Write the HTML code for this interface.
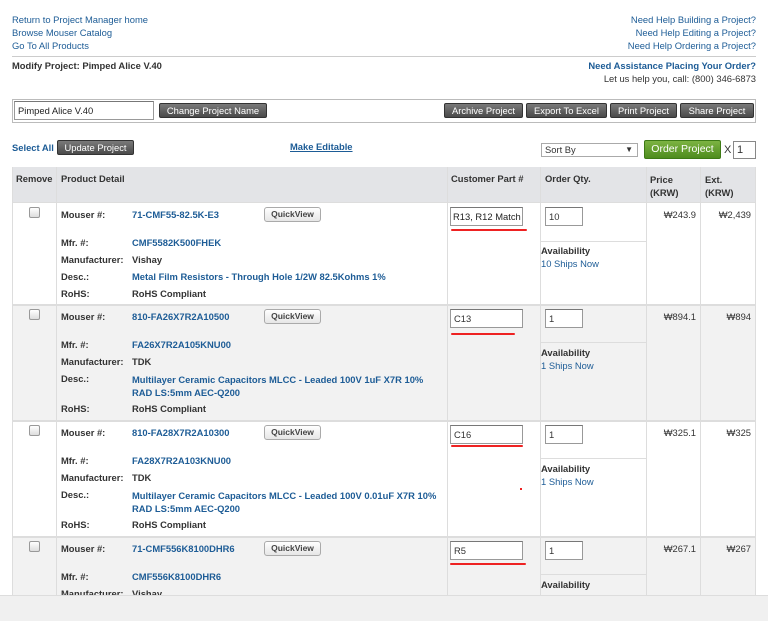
<!DOCTYPE html>
<html><head><meta charset="utf-8"><style>
*{margin:0;padding:0;box-sizing:border-box}
body{width:768px;height:621px;overflow:hidden;background:#fff;font-family:"Liberation Sans",Arial,sans-serif;font-size:9.4px;color:#333;position:relative}
.a{position:absolute;white-space:nowrap}
.l{color:#1d5c96}
.b{font-weight:bold}
.btn{position:absolute;background:linear-gradient(#7a7a7a,#4a4a4a);color:#fff;border:1px solid #333;border-radius:2px;font-size:9.4px;text-align:center;line-height:13px;white-space:nowrap}
.inp{position:absolute;border:1px solid #999;border-top-color:#777;background:#fff;font-size:9.4px;padding-left:3px;line-height:17px;white-space:nowrap;overflow:hidden}
.ln{position:absolute;background:#ddd}
.qv{position:absolute;border:1px solid #aaa;border-radius:3px;background:linear-gradient(#fff,#e6e6e6);font-size:8.5px;font-weight:bold;color:#444;text-align:center;line-height:13px;width:57px;height:15px}
.cb{position:absolute;width:11px;height:11px;border:1px solid #999;border-radius:2px;background:linear-gradient(#fff,#ddd)}
.red{position:absolute;height:2px;background:#e22;border-radius:1px}
</style></head><body>
<div class="a l" style="left:12px;top:14px">Return to Project Manager home</div>
<div class="a l" style="left:12px;top:27px">Browse Mouser Catalog</div>
<div class="a l" style="left:12px;top:40px">Go To All Products</div>
<div class="a l" style="right:12px;top:14px">Need Help Building a Project?</div>
<div class="a l" style="right:12px;top:27px">Need Help Editing a Project?</div>
<div class="a l" style="right:12px;top:40px">Need Help Ordering a Project?</div>
<div class="ln" style="left:12px;top:56px;width:744px;height:1px;background:#ccc"></div>
<div class="a b" style="left:12px;top:60px">Modify Project: Pimped Alice V.40</div>
<div class="a b l" style="right:12px;top:60px">Need Assistance Placing Your Order?</div>
<div class="a" style="right:12px;top:73px">Let us help you, call: (800) 346-6873</div>

<div style="position:absolute;left:12px;top:99px;width:744px;height:24px;border:1px solid #bbb"></div>
<div class="inp" style="left:14px;top:101px;width:140px;height:19px;color:#222">Pimped Alice V.40</div>
<div class="btn" style="left:159px;top:103px;width:108px;height:15px">Change Project Name</div>
<div class="btn" style="left:444px;top:103px;width:79px;height:15px">Archive Project</div>
<div class="btn" style="left:526px;top:103px;width:81px;height:15px">Export To Excel</div>
<div class="btn" style="left:610px;top:103px;width:67px;height:15px">Print Project</div>
<div class="btn" style="left:680px;top:103px;width:74px;height:15px">Share Project</div>

<div class="a b l" style="left:12px;top:142px">Select All</div>
<div class="btn" style="left:57px;top:140px;width:77px;height:15px">Update Project</div>
<div class="a b l" style="left:290px;top:141px;text-decoration:underline">Make Editable</div>
<div class="inp" style="left:541px;top:143px;width:97px;height:14px;line-height:12px;border-color:#aaa">Sort By<span style="position:absolute;right:4px;font-size:8px">▼</span></div>
<div class="btn" style="left:644px;top:140px;width:77px;height:19px;line-height:17px;font-size:10.5px;background:linear-gradient(#7cb342,#4e8c1e);border-color:#3d7a15">Order Project</div>
<div class="a" style="left:724px;top:144px;font-size:11px">X</div>
<div class="inp" style="left:733px;top:141px;width:23px;height:18px;font-size:11px;border-color:#888">1</div>

<div style="position:absolute;left:12px;top:167px;width:744px;height:35px;background:#e3e4e7"></div>
<div style="position:absolute;left:12px;top:304px;width:744px;height:116px;background:#f2f2f2"></div>
<div style="position:absolute;left:12px;top:536px;width:744px;height:60px;background:#f2f2f2"></div>
<div class="ln" style="left:12px;top:202px;width:744px;height:1px"></div>
<div class="ln" style="left:12px;top:304px;width:744px;height:2px"></div>
<div class="ln" style="left:12px;top:420px;width:744px;height:2px"></div>
<div class="ln" style="left:12px;top:536px;width:744px;height:2px"></div>
<div class="ln" style="left:12px;top:167px;width:1px;height:430px"></div>
<div class="ln" style="left:56px;top:167px;width:1px;height:430px"></div>
<div class="ln" style="left:447px;top:167px;width:1px;height:430px"></div>
<div class="ln" style="left:540px;top:167px;width:1px;height:430px"></div>
<div class="ln" style="left:646px;top:167px;width:1px;height:430px"></div>
<div class="ln" style="left:700px;top:167px;width:1px;height:430px"></div>
<div class="ln" style="left:755px;top:167px;width:1px;height:430px"></div>
<div class="ln" style="left:540px;top:241px;width:106px;height:1px"></div>
<div class="ln" style="left:540px;top:342px;width:106px;height:1px"></div>
<div class="ln" style="left:540px;top:458px;width:106px;height:1px"></div>
<div class="ln" style="left:540px;top:574px;width:106px;height:1px"></div>
<div class="a b" style="left:16px;top:173px">Remove</div>
<div class="a b" style="left:61px;top:173px">Product Detail</div>
<div class="a b" style="left:451px;top:173px">Customer Part #</div>
<div class="a b" style="left:545px;top:173px">Order Qty.</div>
<div class="a b" style="left:650px;top:173px;line-height:13px">Price<br>(KRW)</div>
<div class="a b" style="left:705px;top:173px;line-height:13px">Ext.<br>(KRW)</div>

<!-- row1 -->
<div class="cb" style="left:29px;top:207px"></div>
<div class="a b" style="left:61px;top:209px">Mouser #:</div><div class="a b l" style="left:132px;top:209px">71-CMF55-82.5K-E3</div>
<div class="qv" style="left:264px;top:207px">QuickView</div>
<div class="a b" style="left:61px;top:237px">Mfr. #:</div><div class="a b l" style="left:132px;top:237px">CMF5582K500FHEK</div>
<div class="a b" style="left:61px;top:254px">Manufacturer:</div><div class="a b" style="left:132px;top:254px">Vishay</div>
<div class="a b" style="left:61px;top:271px">Desc.:</div><div class="a b l" style="left:132px;top:271px">Metal Film Resistors - Through Hole 1/2W 82.5Kohms 1%</div>
<div class="a b" style="left:61px;top:288px">RoHS:</div><div class="a b" style="left:132px;top:288px">RoHS Compliant</div>
<div class="inp" style="left:450px;top:207px;width:73px;height:19px;color:#222;padding-left:2px">R13, R12 Match</div>
<div class="red" style="left:451px;top:229px;width:76px"></div>
<div class="inp" style="left:545px;top:207px;width:38px;height:19px">10</div>
<div class="a b" style="left:541px;top:245px">Availability</div><div class="a l" style="left:541px;top:258px">10 Ships Now</div>
<div class="a" style="right:72px;top:209px">₩243.9</div><div class="a" style="right:17px;top:209px">₩2,439</div>

<!-- row2 -->
<div class="cb" style="left:29px;top:309px"></div>
<div class="a b" style="left:61px;top:311px">Mouser #:</div><div class="a b l" style="left:132px;top:311px">810-FA26X7R2A10500</div>
<div class="qv" style="left:264px;top:309px">QuickView</div>
<div class="a b" style="left:61px;top:339px">Mfr. #:</div><div class="a b l" style="left:132px;top:339px">FA26X7R2A105KNU00</div>
<div class="a b" style="left:61px;top:356px">Manufacturer:</div><div class="a b" style="left:132px;top:356px">TDK</div>
<div class="a b" style="left:61px;top:373px">Desc.:</div><div class="a b l" style="left:132px;top:373px;line-height:13px">Multilayer Ceramic Capacitors MLCC - Leaded 100V 1uF X7R 10%<br>RAD LS:5mm AEC-Q200</div>
<div class="a b" style="left:61px;top:403px">RoHS:</div><div class="a b" style="left:132px;top:403px">RoHS Compliant</div>
<div class="inp" style="left:450px;top:309px;width:73px;height:19px">C13</div>
<div class="red" style="left:451px;top:333px;width:64px"></div>
<div class="inp" style="left:545px;top:309px;width:38px;height:19px">1</div>
<div class="a b" style="left:541px;top:347px">Availability</div><div class="a l" style="left:541px;top:360px">1 Ships Now</div>
<div class="a" style="right:72px;top:311px">₩894.1</div><div class="a" style="right:17px;top:311px">₩894</div>

<!-- row3 -->
<div class="cb" style="left:29px;top:425px"></div>
<div class="a b" style="left:61px;top:427px">Mouser #:</div><div class="a b l" style="left:132px;top:427px">810-FA28X7R2A10300</div>
<div class="qv" style="left:264px;top:425px">QuickView</div>
<div class="a b" style="left:61px;top:455px">Mfr. #:</div><div class="a b l" style="left:132px;top:455px">FA28X7R2A103KNU00</div>
<div class="a b" style="left:61px;top:472px">Manufacturer:</div><div class="a b" style="left:132px;top:472px">TDK</div>
<div class="a b" style="left:61px;top:489px">Desc.:</div><div class="a b l" style="left:132px;top:489px;line-height:13px">Multilayer Ceramic Capacitors MLCC - Leaded 100V 0.01uF X7R 10%<br>RAD LS:5mm AEC-Q200</div>
<div class="a b" style="left:61px;top:519px">RoHS:</div><div class="a b" style="left:132px;top:519px">RoHS Compliant</div>
<div class="inp" style="left:450px;top:425px;width:73px;height:19px">C16</div>
<div class="red" style="left:451px;top:445px;width:72px"></div>
<div class="inp" style="left:545px;top:425px;width:38px;height:19px">1</div>
<div class="a b" style="left:541px;top:463px">Availability</div><div class="a l" style="left:541px;top:476px">1 Ships Now</div>
<div class="a" style="right:72px;top:427px">₩325.1</div><div class="a" style="right:17px;top:427px">₩325</div>
<div style="position:absolute;left:520px;top:488px;width:2px;height:2px;background:#e22"></div>

<!-- row4 -->
<div class="cb" style="left:29px;top:541px"></div>
<div class="a b" style="left:61px;top:543px">Mouser #:</div><div class="a b l" style="left:132px;top:543px">71-CMF556K8100DHR6</div>
<div class="qv" style="left:264px;top:541px">QuickView</div>
<div class="a b" style="left:61px;top:571px">Mfr. #:</div><div class="a b l" style="left:132px;top:571px">CMF556K8100DHR6</div>
<div class="a b" style="left:61px;top:588px">Manufacturer:</div><div class="a b" style="left:132px;top:588px">Vishay</div>
<div class="inp" style="left:450px;top:541px;width:73px;height:19px">R5</div>
<div class="red" style="left:450px;top:563px;width:76px"></div>
<div class="inp" style="left:545px;top:541px;width:38px;height:19px">1</div>
<div class="a b" style="left:541px;top:579px">Availability</div>
<div class="a" style="right:72px;top:543px">₩267.1</div><div class="a" style="right:17px;top:543px">₩267</div>

<div style="position:absolute;left:0;top:595px;width:768px;height:26px;background:#f0f0f0;border-top:1px solid #ddd"></div>
</body></html>
